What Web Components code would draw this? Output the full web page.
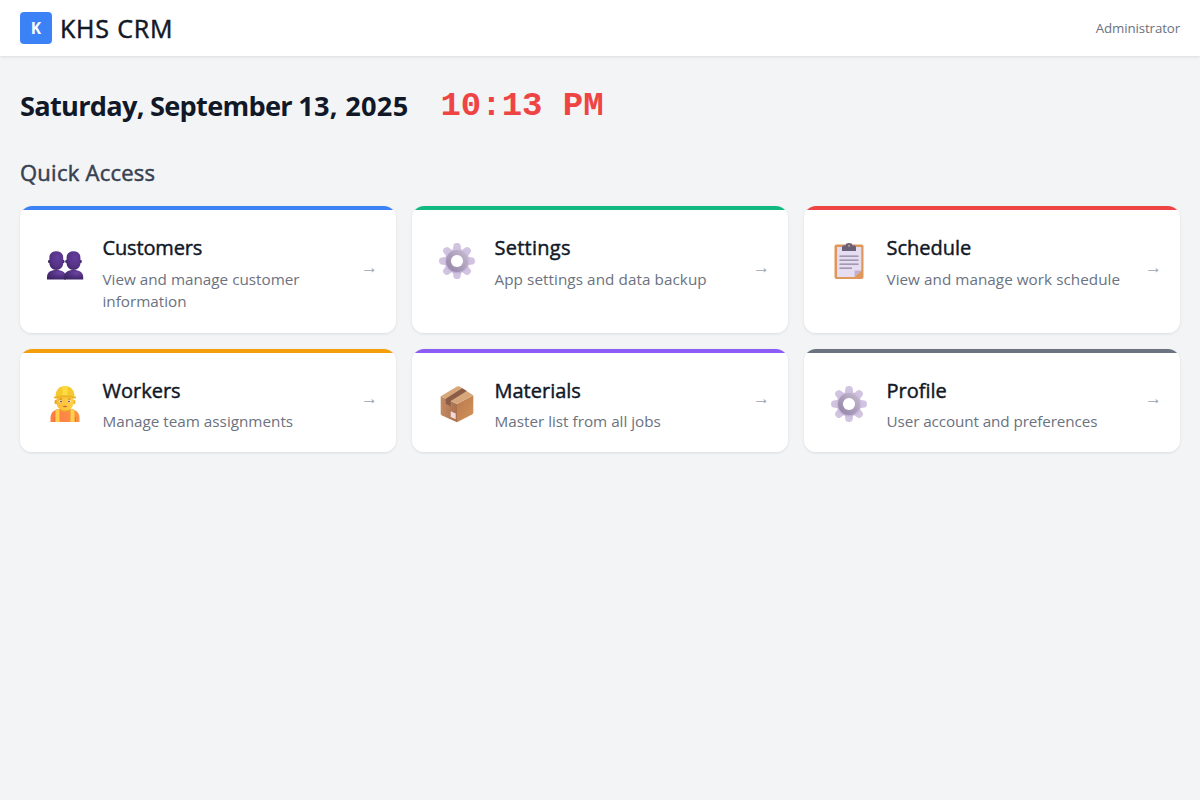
<!DOCTYPE html>
<html lang="en">
<head>
<meta charset="utf-8">
<title>KHS CRM</title>
<style>
body{margin:0;background:#f3f4f6;font-family:"Open Sans","Noto Sans",sans-serif;color:#111827}
</style>
</head>
<body>
<crm-app></crm-app>
<script>
const ICONS = {
customers: `<defs>
<radialGradient id="h" cx=".6" cy=".35" r=".75"><stop offset="0" stop-color="#643e9c"/><stop offset=".6" stop-color="#573388"/><stop offset="1" stop-color="#40266a"/></radialGradient>
<radialGradient id="b" cx=".65" cy=".3" r=".8"><stop offset="0" stop-color="#6c459f"/><stop offset=".5" stop-color="#523182"/><stop offset="1" stop-color="#3b2460"/></radialGradient></defs>
<g id="p"><path d="M0 36.500v-2.500c0-4.500 3.500-7 9.300-7s9.700 2.500 9.700 7v2.500z" fill="url(#b)"/><ellipse cx="2.300" cy="18.500" rx="1.300" ry="1.800" fill="#43276d"/><ellipse cx="16.300" cy="18.500" rx="1.300" ry="1.800" fill="#43276d"/><path d="M2.400 14.500c0-4 2.800-6.200 6.900-6.200s6.900 2.200 6.900 6.200v5.500c0 4-3 7-6.900 7s-6.900-3-6.900-7z" fill="url(#h)"/></g>
<use href="#p" x="17.200"/>`,
gear: `<defs><linearGradient id="g" gradientUnits="userSpaceOnUse" x1="0" y1="0" x2="0" y2="36"><stop offset="0" stop-color="#d3c6e2"/><stop offset="1" stop-color="#bcabd2"/></linearGradient>
<linearGradient id="r" x1="1" y1="0" x2="0" y2="1"><stop offset="0" stop-color="#c1b7cc"/><stop offset="1" stop-color="#9787ab"/></linearGradient></defs>
<g fill="url(#g)"><path id="t" d="M13.500 9 14.400 2.500C14.700.6 16.200 0 18 0s3.300.6 3.600 2.500L22.500 9z"/>
<use href="#t" transform="rotate(45 18 18)"/><use href="#t" transform="rotate(90 18 18)"/><use href="#t" transform="rotate(135 18 18)"/><use href="#t" transform="rotate(180 18 18)"/><use href="#t" transform="rotate(225 18 18)"/><use href="#t" transform="rotate(270 18 18)"/><use href="#t" transform="rotate(315 18 18)"/>
<circle cx="18" cy="18" r="12.300"/></g><circle cx="18" cy="18" r="8.500" fill="none" stroke="url(#r)" stroke-width="5"/><circle cx="18" cy="18" r="6" fill="#fff"/>`,
clipboard: `<rect x="3.500" y="1.500" width="29" height="34.500" rx="2" fill="#df985c"/><path d="M6 4h24.300v23.500L23.500 34H6z" fill="#e6def0"/><path d="M30.300 27.500h-6.800V34z" fill="#bfb0d4"/>
<path d="M11 4.200c0-1 .7-1.700 1.700-1.700h1.600C14.700.8 16 0 18 0s3.300.8 3.700 2.500h1.600c1 0 1.700.7 1.700 1.700V8H11z" fill="#6a6078"/><circle cx="18" cy="2.800" r="1.100" fill="#bd9b8b"/>
<path d="M9 13.200h18M9 17.200h18M9 21.200h18M9 25.200h11.500" stroke="#8d819f" stroke-width="1.300" stroke-linecap="round"/>`,
worker: `<defs><linearGradient id="f" x1="0" x2="1"><stop offset="0" stop-color="#f9bd35"/><stop offset="1" stop-color="#ffd244"/></linearGradient><linearGradient id="v" x1="0" x2="1"><stop offset="0" stop-color="#ff7b46"/><stop offset="1" stop-color="#f89446"/></linearGradient></defs>
<path d="M3.500 36v-4c0-5.500 3.800-8.800 10-9.200h9c6.200.4 10 3.700 10 9.200v4z" fill="url(#v)"/><path d="M8.500 36V24l4-1.200V36zM23.500 36V22.800l4 1.200v12z" fill="#ffcf48"/><path d="M7.500 36v-5M28.500 36v-5" stroke="#e26b38" stroke-width=".8"/>
<path d="M13.500 20h9v4.500c-1 2-8 2-9 0z" fill="#eba52f"/><ellipse cx="9" cy="16" rx="1.500" ry="2.300" fill="#e9a32d"/><ellipse cx="27" cy="16" rx="1.500" ry="2.300" fill="#f1b63a"/>
<path d="M9.500 9h17v7.500c0 5-3.700 8-8.500 8s-8.500-3-8.500-8z" fill="url(#f)"/><circle cx="13.800" cy="15.500" r="1.400" fill="#fff"/><circle cx="14" cy="15.500" r="1" fill="#7c4a3b"/><circle cx="22.200" cy="15.500" r="1.400" fill="#fff"/><circle cx="22" cy="15.500" r="1" fill="#7c4a3b"/><path d="M12.300 13.400q1.500-1 2.800-.3M20.900 13.100q1.400-.7 2.800.3" stroke="#a66327" stroke-width=".7" fill="none"/><path d="M15.500 20.200q2.500-1 5 0-2.500 2.200-5 0z" fill="#d65838"/>
<path d="M8.500 10.500C8.500 4 12.500 0 18 0s9.500 4 9.500 10.500z" fill="#f5c92e"/><path d="M15.500 1q2.500-1.500 5 0v9h-5z" fill="#ffdb42"/><path d="M7 10.800q11-3.300 22 0 .8 1.600-1 1.600-10-2.500-20 0-1.800 0-1-1.600z" fill="#e8b426"/>`,
box: `<defs><linearGradient id="l" x1="0" x2="1"><stop offset="0" stop-color="#c58a62"/><stop offset="1" stop-color="#a8704e"/></linearGradient><linearGradient id="d" x1="0" y1="0" x2="1" y2="1"><stop offset="0" stop-color="#b9784f"/><stop offset="1" stop-color="#d39459"/></linearGradient></defs>
<path d="M1.700 10.200 18 18v18.200L3 29.400Q1.700 28.800 1.700 27.400z" fill="url(#l)"/><path d="M34.300 9.200 18 18v18.200L33 28.400q1.300-.7 1.300-2z" fill="url(#d)"/><path d="M1.700 10.200 18 .5q1.300-.7 2.600 0l13.700 8.700L18 18z" fill="#d6a77a"/>
<path d="M6.700 12.700 23.200 2.300l4.500 2.800L11.700 15v5.200l-5-2.500z" fill="#8b5c47"/><path d="M11.700 25.300l5 2.200v5.700l-5-2.300z" fill="#f0d9d9"/>`
};

class CrmHeader extends HTMLElement {
  constructor(){
    super();
    this.attachShadow({mode:'open'}).innerHTML = `<style>
:host{display:flex;align-items:center;justify-content:space-between;height:56px;box-sizing:border-box;padding:0 20px;background:#fff;box-shadow:0 1px 3px rgba(0,0,0,.1)}
.brand{display:flex;align-items:center;gap:8px}
.logo{width:32px;height:32px;border-radius:4px;background:#3b82f6;color:#fff;font-size:15.500px;font-weight:700;line-height:32px;text-align:center}
.name{font-size:25px;letter-spacing:.8px;line-height:32px;padding-bottom:1px;white-space:nowrap;-webkit-text-stroke:.5px currentColor}
.user{font-size:13.300px;letter-spacing:-.12px;line-height:20px;color:#6b7280}
</style><div class="brand"><div class="logo">K</div><div class="name"><slot></slot></div></div><div class="user"><slot name="user"></slot></div>`;
  }
}
customElements.define('crm-header', CrmHeader);

class CrmClock extends HTMLElement {
  constructor(){
    super();
    this.attachShadow({mode:'open'}).innerHTML = `<style>
:host{display:flex;align-items:center;gap:32px;height:42px;white-space:nowrap}
.date{font-size:27.200px;letter-spacing:-.73px;font-weight:700;line-height:42px}
.time{font-family:"Liberation Mono",monospace;font-size:34px;font-weight:700;line-height:42px;color:#ef4444}
</style><div class="date"><slot name="date"></slot></div><div class="time"><slot name="time"></slot></div>`;
  }
}
customElements.define('crm-clock', CrmClock);

class CrmCard extends HTMLElement {
  connectedCallback(){
    this.attachShadow({mode:'open'}).innerHTML = `<style>
:host{display:flex;align-items:center;box-sizing:border-box;padding:4px 20px 0 27px;background:linear-gradient(${this.getAttribute('accent')} 4px,#fff 4px);border-radius:12px;box-shadow:0 1px 3px rgba(0,0,0,.1)}
svg{display:block;flex:none;width:36px;height:36px;align-self:flex-start;margin-top:33px;overflow:visible}
.text{flex:1;min-width:0;align-self:flex-start;padding:24px 11px 0 19.500px}
.title{font-size:20px;line-height:27px;-webkit-text-stroke:.45px currentColor}
.desc{font-size:15.250px;line-height:22.400px;margin-top:var(--desc-gap,7px);letter-spacing:var(--desc-track,0);color:#6b7280}
.arrow{font:17px "Liberation Sans",sans-serif;line-height:20px;color:#9ca3af;flex:none;width:15px;margin-top:-7px}
</style><svg viewBox="0 0 36 36">${ICONS[this.getAttribute('icon')]}</svg><div class="text"><div class="title"><slot name="title"></slot></div><div class="desc"><slot></slot></div></div><div class="arrow">→</div>`;
  }
}
customElements.define('crm-card', CrmCard);

class CrmApp extends HTMLElement {
  constructor(){
    super();
    this.attachShadow({mode:'open'}).innerHTML = `<style>
:host{display:block}
main{padding:29px 20px}
h2{margin:28px 0 17px;font-size:22px;letter-spacing:.25px;font-weight:400;-webkit-text-stroke:.5px currentColor;line-height:34px;height:34px;color:#374151}
.digits{letter-spacing:.27px}
.grid{display:grid;grid-template-columns:repeat(3,1fr);grid-template-rows:127px 103px;gap:16px}
crm-card:nth-child(n+4){--desc-gap:6px}
crm-card:nth-child(2){--desc-track:.07px}
crm-card:nth-child(3){--desc-track:.04px}
crm-card:nth-child(6){--desc-track:-.1px}
[slot=title]{letter-spacing:var(--title-track,0)}
crm-card:nth-child(1){--title-track:-.15px}
crm-card:nth-child(2){--title-track:.25px}
</style>
<crm-header>KHS CRM<span slot="user">Administrator</span></crm-header>
<main>
<crm-clock><span slot="date">Saturday, September <span class="digits">13, 2025</span></span><span slot="time">10:13 PM</span></crm-clock>
<h2>Quick Access</h2>
<div class="grid">
<crm-card accent="#3b82f6" icon="customers"><span slot="title">Customers</span>View and manage customer information</crm-card>
<crm-card accent="#10b981" icon="gear"><span slot="title">Settings</span>App settings and data backup</crm-card>
<crm-card accent="#ef4444" icon="clipboard"><span slot="title">Schedule</span>View and manage work schedule</crm-card>
<crm-card accent="#f59e0b" icon="worker"><span slot="title">Workers</span>Manage team assignments</crm-card>
<crm-card accent="#8b5cf6" icon="box"><span slot="title">Materials</span>Master list from all jobs</crm-card>
<crm-card accent="#6b7280" icon="gear"><span slot="title">Profile</span>User account and preferences</crm-card>
</div></main>`;
  }
}
customElements.define('crm-app', CrmApp);
</script>
</body>
</html>
